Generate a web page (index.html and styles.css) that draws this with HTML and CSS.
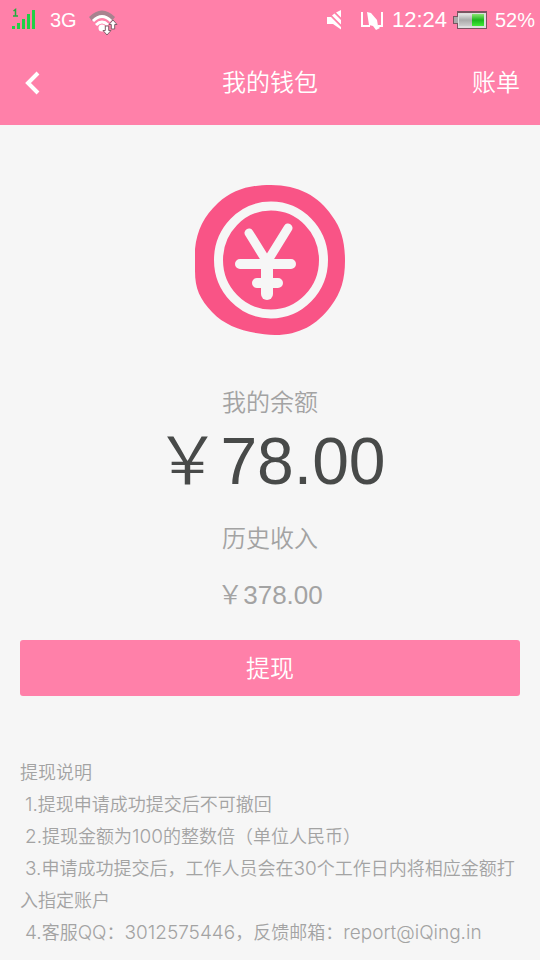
FILE: index.html
```html
<!DOCTYPE html>
<html lang="zh-CN">
<head>
<meta charset="utf-8">
<meta name="viewport" content="width=device-width, initial-scale=1">
<title>我的钱包</title>
<link rel="stylesheet" href="styles.css">
</head>
<body>
<header class="top">
  <div class="status">
    <div class="status-group">
      <svg class="signal" width="26" height="24" viewBox="0 0 26 24" aria-hidden="true">
        <path d="M1.500 3L3.500 1.500V8M1 8H6" fill="none" stroke="#1fae3c" stroke-width="1.500"/>
        <path d="M0 18h3v3H0zM5 15h3v6H5zM10 11h3v10h-3zM15 6h3v15h-3zM20 2h3v19h-3z" fill="#1fd045"/>
      </svg>
      <span class="network">3G</span>
      <svg class="wifi" width="30" height="28" viewBox="0 0 30 28" aria-hidden="true">
        <path d="M0 8Q13-5 26 8L23 12Q13 2 3 12Z" fill="#a8828f"/>
        <path d="M4 12Q13 3 22 12M7 16Q13 10 19 16" fill="none" stroke="#fff" stroke-width="3"/>
        <circle cx="13" cy="19" r="3.500" fill="#fff"/>
        <path d="M18 26l-4-4.500h2.300V17h3.400v4.500H22zM24 11l4 4.500h-2.300V20h-3.400v-4.500H20z" fill="#fff" stroke="#80606b" stroke-width="1"/>
      </svg>
    </div>
    <div class="status-group">
      <svg class="mute" width="18" height="20" viewBox="0 0 18 20" aria-hidden="true">
        <path d="M1 7h4L15 17v2.500L7 14H1zM6 5.500l2.500-2L15 10v4.500zM10 2.500L15 0v7.500z" fill="#fff"/>
      </svg>
      <svg class="silent" width="24" height="22" viewBox="0 0 24 22" aria-hidden="true">
        <path d="M2 3V17H10M22 3V17H18" fill="none" stroke="#fff" stroke-width="2"/>
        <path d="M7 3L11 4 17 11 18 17 20 19 16 21 13 17 9 16Z" fill="#fff"/>
      </svg>
      <span class="clock">12:24</span>
      <svg class="battery" width="34" height="20" viewBox="0 0 34 20" aria-hidden="true">
        <defs>
          <linearGradient id="charge" x2="0" y2="1"><stop stop-color="#8be373"/><stop offset=".5" stop-color="#1ab61b"/><stop offset="1" stop-color="#40e936"/></linearGradient>
          <linearGradient id="empty" x2="0" y2="1"><stop stop-color="#e4e4e4"/><stop offset=".5" stop-color="#aaa"/><stop offset="1" stop-color="#ccc"/></linearGradient>
        </defs>
        <path d="M0 6h4V1h30v18H4v-5H0z" fill="#795561"/>
        <path d="M1 7h4v6H1z" fill="#aaa"/>
        <path d="M5 3h28v15H5z" fill="#dedede"/>
        <path d="M6 4h13v12H6z" fill="url(#empty)"/>
        <path d="M19 4h12v12H19z" fill="url(#charge)"/>
      </svg>
      <span class="percent">52%</span>
    </div>
  </div>
  <nav class="bar">
    <button class="back" type="button" aria-label="返回">
      <svg width="16" height="24" viewBox="0 0 16 24" aria-hidden="true"><path d="M14 2L4 12L14 22" fill="none" stroke="#fff" stroke-width="4"/></svg>
    </button>
    <h1 class="title">我的钱包</h1>
    <a class="bill" href="#bill">账单</a>
  </nav>
</header>
<main class="wallet">
  <svg class="coin" width="150" height="150" viewBox="0 0 150 150" aria-hidden="true">
    <path d="M76 0C103 0 124 11 137 31C147 44 150 59 150 76C150 94 146 108 136 121C122 140 104 150 80 150C55 149 32 143 17 127C5 114 0 104 0 86V64C2 45 9 31 23 18C38 5 53 0 76 0Z" fill="#f95486"/>
    <ellipse cx="76" cy="75" rx="52.500" ry="54" fill="none" stroke="#f6f6f6" stroke-width="9"/>
    <path d="M54 48L72 77L93 43" fill="none" stroke="#f6f6f6" stroke-width="9" stroke-linecap="round" stroke-linejoin="round"/>
    <path d="M72 77V109" stroke="#f6f6f6" stroke-width="12" stroke-linecap="round"/>
    <path d="M45 79H96M62 98H83" stroke="#f6f6f6" stroke-width="10" stroke-linecap="round"/>
  </svg>
  <section class="amounts">
    <h2 class="label">我的余额</h2>
    <p class="balance">￥78.00</p>
    <h2 class="label">历史收入</h2>
    <p class="income">￥378.00</p>
  </section>
  <button class="withdraw" type="button">提现</button>
  <section class="notes">
    <h2 class="notes-title">提现说明</h2>
    <p><span class="latin">1.</span>提现申请成功提交后不可撤回</p>
    <p><span class="latin">2.</span>提现金额为<span class="latin">100</span>的整数倍（单位人民币）</p>
    <p><span class="latin">3.</span>申请成功提交后，工作人员会在<span class="latin">30</span>个工作日内将相应金额打入指定账户</p>
    <p><span class="latin">4.</span>客服<span class="latin">QQ</span>：<span class="latin">3012575446</span>，反馈邮箱：<span class="latin">report@iQing.in</span></p>
  </section>
</main>
</body>
</html>
```
FILE: styles.css
```css
* {
  box-sizing: border-box;
}

body {
  margin: 0;
  background: #f6f6f6;
  color: #a3a3a3;
  font-family: "Liberation Sans", "Noto Sans CJK SC", sans-serif;
  font-weight: 350;
}

h1,
h2,
p {
  margin: 0;
  font-weight: 350;
}

button {
  border: 0;
  padding: 0;
  color: #fff;
  font: inherit;
  cursor: pointer;
}

svg {
  display: block;
  flex: none;
}

.top {
  background: #ff80a9;
  color: #fff;
}

.status {
  display: flex;
  justify-content: space-between;
  height: 40px;
  padding: 0 5px 0 12px;
}

.status-group {
  display: flex;
  align-items: center;
}

.network {
  margin: 0 12px;
  font-size: 20px;
}

.wifi {
  margin-top: 6px;
}

.silent {
  margin-left: 16px;
}

.clock {
  margin: 0 6px 0 8px;
  font-size: 22px;
}

.percent {
  margin-left: 8px;
  font-size: 20px;
}

.bar {
  display: grid;
  grid-template-columns: 1fr auto 1fr;
  align-items: center;
  height: 85px;
  padding: 0 20px;
  font-size: 24px;
  line-height: 36px;
}

.back {
  justify-self: start;
  padding: 0 4px;
  background: none;
}

.title {
  font-size: 24px;
}

.bill {
  justify-self: end;
  color: inherit;
  text-decoration: none;
}

.wallet {
  padding: 60px 20px 12px;
}

.coin {
  margin: 0 auto;
}

.amounts {
  padding: 50px 0 25px;
  text-align: center;
}

.label {
  font-size: 24px;
  line-height: 36px;
}

.balance {
  margin-bottom: 20px;
  color: #484a49;
  font-size: 66px;
  line-height: 80px;
}

.income {
  margin-top: 18px;
  font-size: 26px;
  line-height: 40px;
}

.withdraw {
  display: block;
  width: 100%;
  height: 56px;
  padding-bottom: 4px;
  border-radius: 3px;
  background: #ff80a9;
  font-size: 24px;
}

.notes {
  padding-top: 61px;
  font-family: Inter, "Noto Sans CJK SC", sans-serif;
  font-size: 18px;
  line-height: 32px;
}

.notes-title {
  font-size: 18px;
}

.notes p {
  text-indent: 5px;
}

.latin {
  font-size: 19px;
  line-height: 24px;
}
```
